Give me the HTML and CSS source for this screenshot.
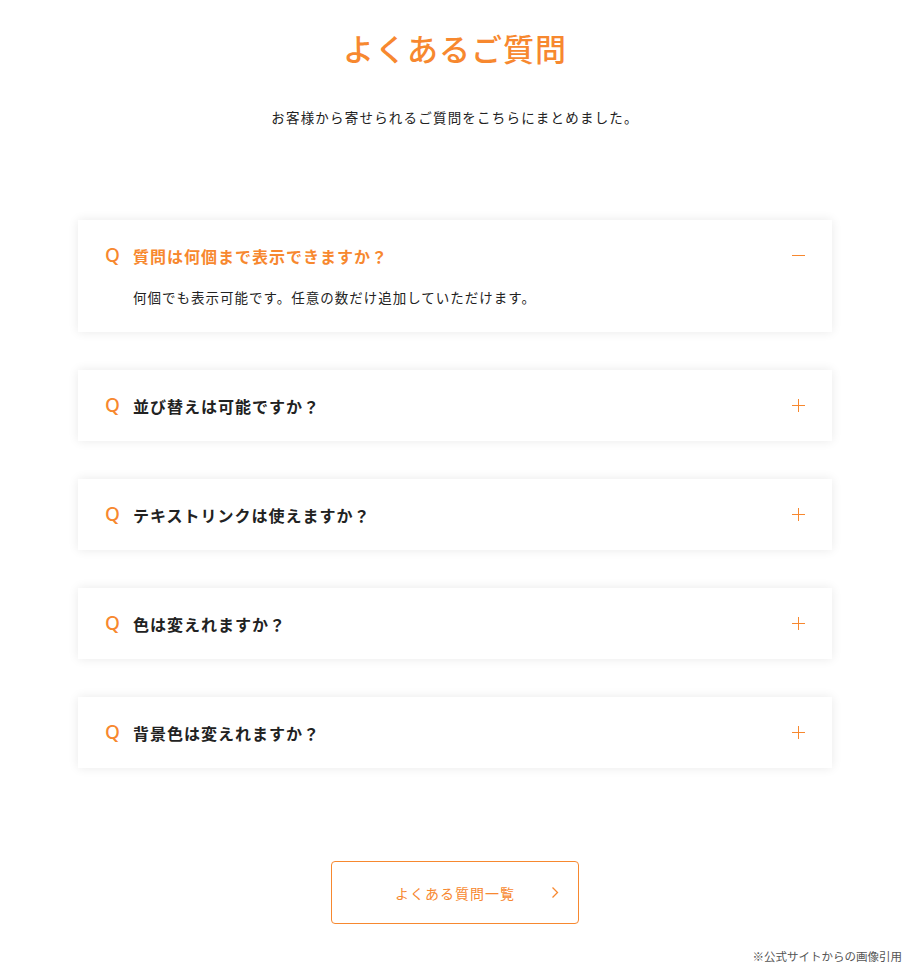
FILE: index.html
```html
<!DOCTYPE html>
<html lang="ja">
<head>
<meta charset="utf-8">
<title>よくあるご質問</title>
<link rel="stylesheet" href="styles.css">
</head>
<body>
<main class="faq">
  <h2 class="faq-title">よくあるご質問</h2>
  <p class="faq-lead">お客様から寄せられるご質問をこちらにまとめました。</p>
  <div class="faq-list">
    <div class="faq-item is-open">
      <div class="faq-q">
        <span class="q-mark">Q</span>
        <span class="q-text">質問は何個まで表示できますか？</span>
        <span class="q-icon minus"></span>
      </div>
      <div class="faq-a">何個でも表示可能です。任意の数だけ追加していただけます。</div>
    </div>
    <div class="faq-item">
      <div class="faq-q">
        <span class="q-mark">Q</span>
        <span class="q-text">並び替えは可能ですか？</span>
        <span class="q-icon plus"></span>
      </div>
    </div>
    <div class="faq-item">
      <div class="faq-q">
        <span class="q-mark">Q</span>
        <span class="q-text">テキストリンクは使えますか？</span>
        <span class="q-icon plus"></span>
      </div>
    </div>
    <div class="faq-item">
      <div class="faq-q">
        <span class="q-mark">Q</span>
        <span class="q-text">色は変えれますか？</span>
        <span class="q-icon plus"></span>
      </div>
    </div>
    <div class="faq-item">
      <div class="faq-q">
        <span class="q-mark">Q</span>
        <span class="q-text">背景色は変えれますか？</span>
        <span class="q-icon plus"></span>
      </div>
    </div>
  </div>
  <div class="faq-more">
    <a class="more-btn" href="#">よくある質問一覧
      <svg class="more-arrow" width="8" height="13" viewBox="0 0 8 13"><path d="M1.5 1.5 L6.5 6.5 L1.5 11.5" fill="none" stroke="#f7882f" stroke-width="1.3"/></svg>
    </a>
  </div>
</main>
<p class="credit">※公式サイトからの画像引用</p>
</body>
</html>
```
FILE: styles.css
```css
html, body {
  margin: 0;
  padding: 0;
  background: #fff;
}
body {
  font-family: "Noto Sans CJK JP", "Noto Sans", sans-serif;
  color: #222;
}
.faq {
  padding: 26px 2px 0 0;
}
.faq-title {
  margin: 0;
  text-align: center;
  font-size: 31px;
  font-weight: 500;
  line-height: 44px;
  color: #f7882f;
  letter-spacing: 1px;
}
.faq-lead {
  margin: 37px 0 0;
  text-align: center;
  font-size: 13.5px;
  line-height: 20px;
  letter-spacing: 1.2px;
  color: #222;
}
.faq-list {
  width: 754px;
  margin: 93px auto 0;
  display: flex;
  flex-direction: column;
  gap: 38px;
}
.faq-item {
  background: #fff;
  box-shadow: 0 0 10px rgba(0, 0, 0, 0.09);
}
.faq-q {
  height: 71px;
  display: flex;
  align-items: center;
  padding: 0 27px 0 27px;
}
.q-mark {
  width: 28px;
  font-size: 19px;
  font-weight: 500;
  font-family: "Noto Sans", sans-serif;
  color: #f7882f;
  line-height: 1;
}
.q-text {
  flex: 1;
  font-size: 16px;
  font-weight: 700;
  letter-spacing: 1px;
  color: #222;
}
.is-open .q-text {
  color: #f7882f;
}
.q-icon {
  position: relative;
  width: 13px;
  height: 13px;
}
.q-icon::before,
.q-icon::after {
  content: "";
  position: absolute;
  background: #f7882f;
}
.q-icon::before {
  left: 0;
  right: 0;
  top: 6px;
  height: 1px;
}
.q-icon.plus::after {
  top: 0;
  bottom: 0;
  left: 6px;
  width: 1px;
}
.faq-a {
  padding: 0 27px 25px 55px;
  margin-top: -4px;
  font-size: 13.5px;
  line-height: 20px;
  letter-spacing: 1px;
  color: #222;
}
.faq-more {
  display: flex;
  justify-content: center;
  margin-top: 93px;
}
.more-btn {
  position: relative;
  width: 246px;
  height: 61px;
  border: 1px solid #f7882f;
  border-radius: 4px;
  display: flex;
  align-items: center;
  justify-content: center;
  color: #f7882f;
  font-size: 14px;
  letter-spacing: 1px;
  text-decoration: none;
}
.more-arrow {
  position: absolute;
  right: 19px;
  top: 24px;
}
.credit {
  margin: 24px 10px 0 0;
  text-align: right;
  font-size: 11.5px;
  color: #555;
}
```
